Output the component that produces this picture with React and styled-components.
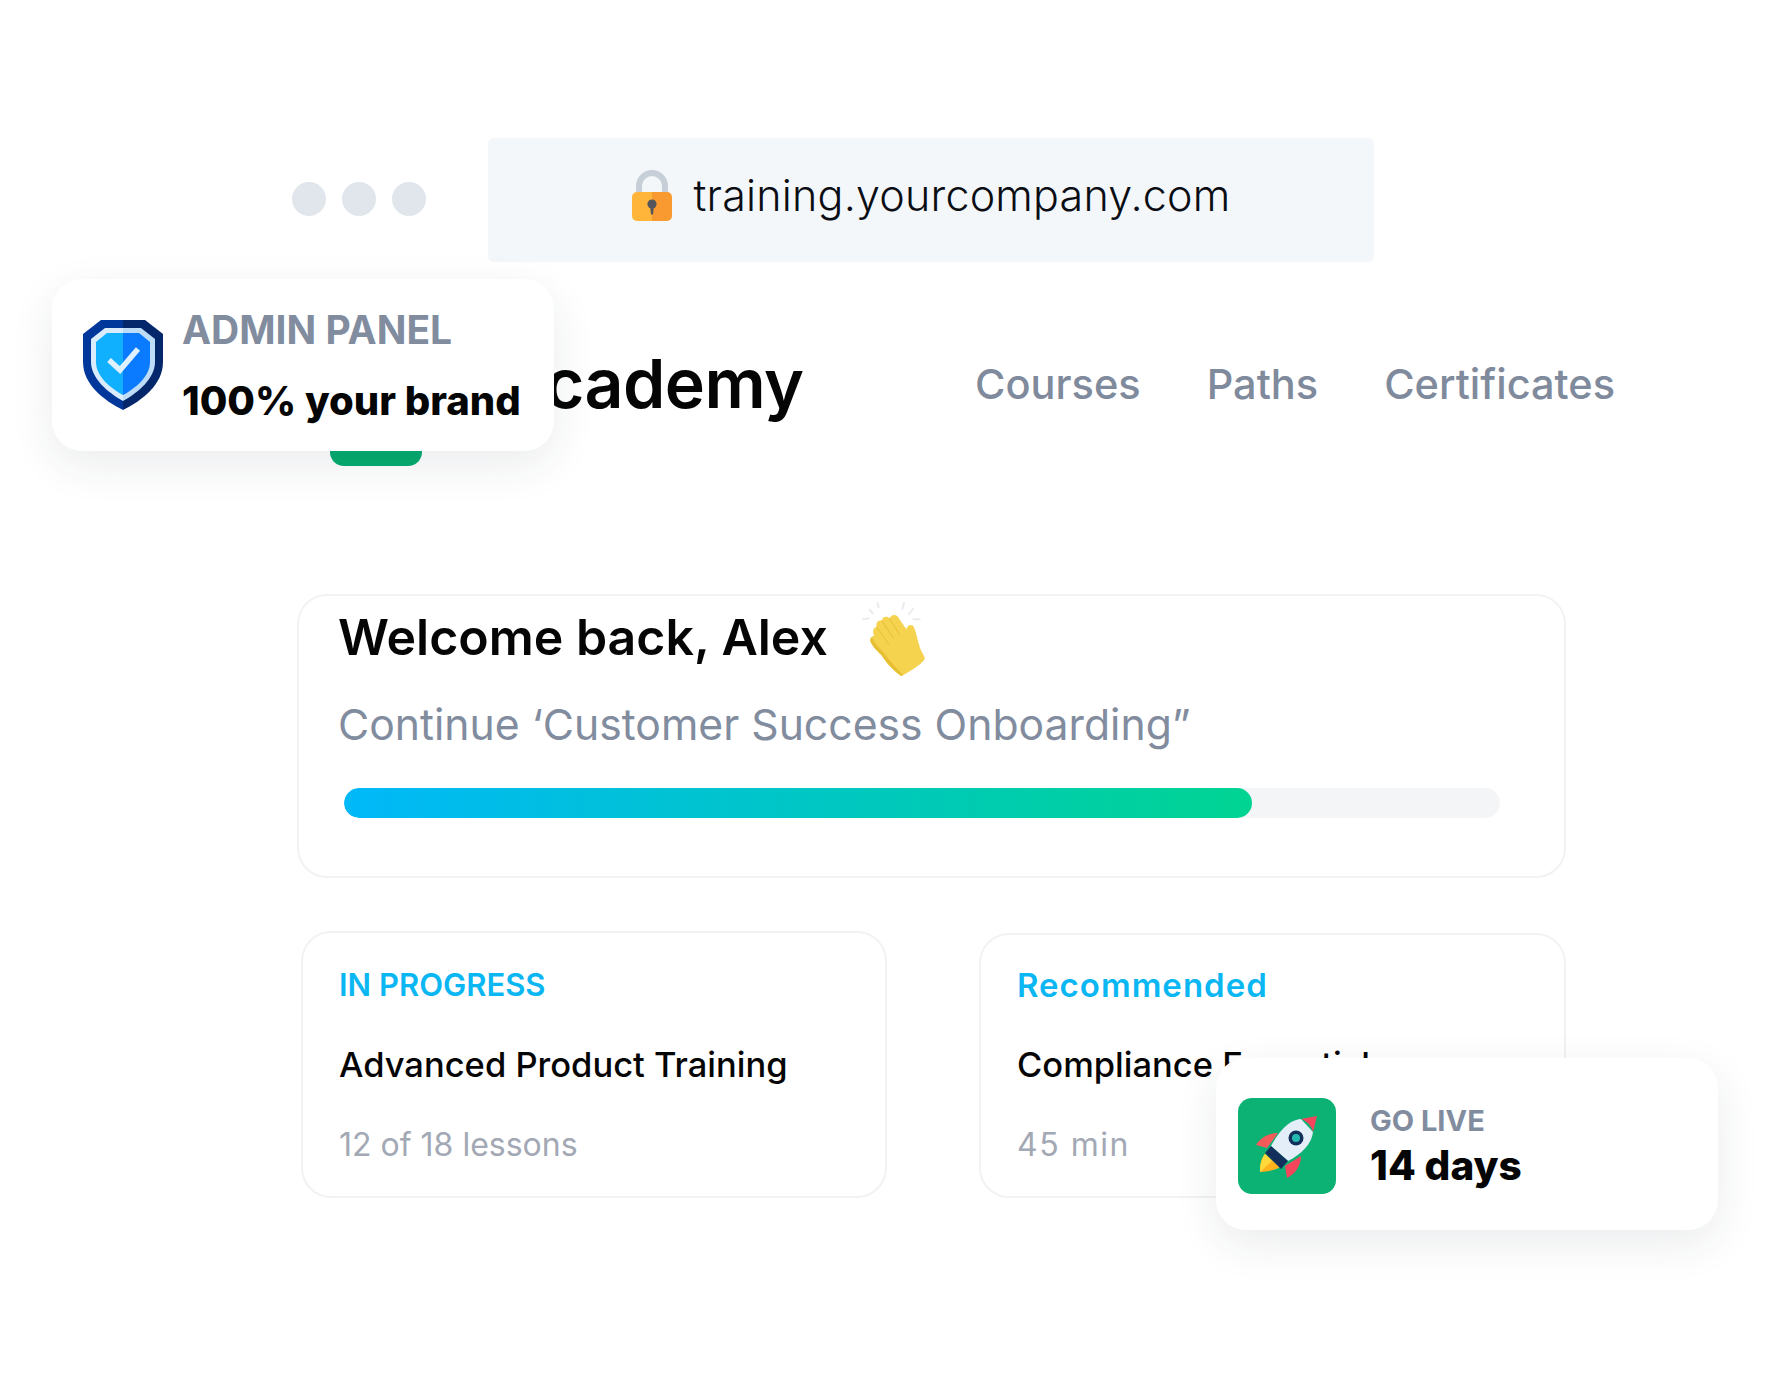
import React from "react";
import styled, { createGlobalStyle } from "styled-components";

const GlobalStyle = createGlobalStyle`
  html, body {
    margin: 0;
    background: #fff;
    font-family: Inter, "Open Sans", "Liberation Sans", sans-serif;
    color: #050505;
  }
`;

const Stage = styled.div`
  position: relative;
  width: 1770px;
  height: 1394px;
  padding: 138px 0 0 297px;
  box-sizing: border-box;
  overflow: hidden;
`;

const Frame = styled.div`
  width: 1269px;
`;

const ChromeRow = styled.div`
  display: flex;
  align-items: center;
  gap: 62px;
  margin-left: -5px;
`;

const Dots = styled.div`
  display: flex;
  gap: 16px;
  margin-top: -2px;
`;

const Dot = styled.span`
  width: 34px;
  height: 34px;
  border-radius: 50%;
  background: #e0e6eb;
`;

const UrlBar = styled.div`
  width: 886px;
  height: 124px;
  border-radius: 6px;
  background: #f4f7fa;
  display: flex;
  align-items: center;
  justify-content: center;
  gap: 22px;
  font-size: 43px;
  font-weight: 300;
  letter-spacing: 0.2px;
  color: #0a0d14;
  padding-bottom: 10px;
  box-sizing: border-box;
`;

const Header = styled.header`
  display: flex;
  align-items: flex-start;
  margin: 112px 0 128px;
  height: 92px;
`;

const Brand = styled.div`
  display: flex;
  gap: 75px;
  margin-left: 33px;
`;

const LogoTile = styled.div`
  width: 92px;
  height: 92px;
  border-radius: 14px;
  background: #05ab6f;
`;

const BrandName = styled.div`
  font-size: 68px;
  font-weight: 600;
  line-height: 80px;
  letter-spacing: -0.6px;
  margin-top: -31px;
  color: #050505;
`;

const Nav = styled.nav`
  display: flex;
  gap: 66px;
  margin-left: auto;
  margin-right: -49px;
`;

const NavLink = styled.a`
  font-size: 41.5px;
  font-weight: 500;
  line-height: 56px;
  margin-top: -18px;
  color: #7f8a9c;
`;

const Panel = styled.section`
  border: 2px solid #f0f2f4;
  border-radius: ${({ $radius }) => $radius || 30}px;
  background: #fff;
  box-sizing: border-box;
`;

const WelcomeCard = styled(Panel)`
  height: 284px;
  padding: 9px 64px 0 39px;
`;

const HeadingRow = styled.div`
  display: flex;
  align-items: flex-start;
  gap: 34px;
  height: 74px;
`;

const Heading = styled.h1`
  margin: 0;
  font-size: 50px;
  font-weight: 600;
  line-height: 64px;
  color: #050505;
`;

const Clap = styled.svg`
  width: 64px;
  height: 76px;
  margin-top: -5px;
`;

const Continue = styled.p`
  margin: 18px 0 0;
  font-size: 42.7px;
  line-height: 56px;
  font-weight: 400;
  color: #818c9e;
`;

const Track = styled.div`
  height: 30px;
  margin: 35px 0 0 6px;
  border-radius: 15px;
  background: #f3f5f7;
  overflow: hidden;
`;

const Fill = styled.div`
  height: 100%;
  border-radius: 15px;
  background: linear-gradient(90deg, #00b8f9 0%, #00d492 100%);
`;

const CardGrid = styled.div`
  display: grid;
  grid-template-columns: 586px 587px;
  column-gap: 92px;
  margin: 53px 0 0 4px;
  align-items: end;
`;

const CourseCard = styled(Panel)`
  height: ${({ $height }) => $height}px;
  padding: 0 36px 29px;
  display: flex;
  flex-direction: column;
  justify-content: flex-end;
`;

const Tag = styled.div`
  font-size: ${({ $size }) => $size}px;
  letter-spacing: ${({ $spacing }) => $spacing || 0}px;
  font-weight: 600;
  line-height: 44px;
  color: #0bb7f3;
`;

const CourseTitle = styled.div`
  margin-top: 36px;
  font-size: 34.5px;
  font-weight: 500;
  line-height: 44px;
  color: #050505;
`;

const CourseMeta = styled.div`
  margin-top: 36px;
  font-size: 32px;
  letter-spacing: ${({ $spacing }) => $spacing || 0}px;
  font-weight: 400;
  line-height: 44px;
  color: #a2a8b4;
`;

const FloatCard = styled.aside`
  position: absolute;
  left: ${({ $left }) => $left}px;
  top: ${({ $top }) => $top}px;
  width: 502px;
  height: 172px;
  border-radius: 30px;
  background: #fff;
  box-shadow: 0 14px 44px rgba(30, 40, 60, 0.09);
  display: flex;
  align-items: center;
  box-sizing: border-box;
  padding-left: ${({ $pad }) => $pad}px;
  gap: ${({ $gap }) => $gap}px;
`;

const FloatLabel = styled.div`
  font-size: ${({ $size }) => $size}px;
  font-weight: 700;
  line-height: 1.2;
  margin-top: ${({ $top }) => $top || 0}px;
  color: #818c9f;
`;

const FloatValue = styled.div`
  font-size: ${({ $size }) => $size}px;
  font-weight: 800;
  line-height: 1.2;
  margin-top: ${({ $gap }) => $gap}px;
  color: #050505;
`;

const RocketTile = styled.div`
  width: 98px;
  height: 96px;
  margin-top: 4px;
  border-radius: 14px;
  background: #0cb274;
  flex: none;
`;

function LockIcon() {
  return (
    <svg width="40" height="51" viewBox="0 0 40 51">
      <path d="M7 26V16a13 13 0 0 1 26 0v10" fill="none" stroke="#c6ced7" strokeWidth="6" />
      <path d="M20 22H5a5 5 0 0 0-5 5v19a5 5 0 0 0 5 5h15z" fill="#ffb53a" />
      <path d="M20 22h15a5 5 0 0 1 5 5v19a5 5 0 0 1-5 5H20z" fill="#f99a30" />
      <circle cx="20" cy="34" r="4.6" fill="#55565c" />
      <path d="M18 36h4l-1 8.500h-2z" fill="#55565c" />
    </svg>
  );
}

function ClapIcon() {
  return (
    <Clap viewBox="72 30 192 228">
      <g stroke="#e9ecef" strokeWidth="6" strokeLinecap="round">
        <path d="M95 60l10 10" />
        <path d="M118 38l4 14" />
        <path d="M198 38l-5 19" />
        <path d="M225 57l-12 15" />
        <path d="M75 88l17-3" />
        <path d="M226 88h19" />
      </g>
      <path
        d="M190 258C170 245 150 225 130 195C115 180 100 165 97 152C97 142 103 137 109 138C102 125 106 112 116 112C112 100 120 88 132 92C132 80 148 76 155 86C158 74 175 70 182 84L205 118C208 105 222 100 228 112C235 128 238 150 245 170C250 188 262 198 260 207C256 218 225 240 190 258Z"
        fill="#f5d34f"
      />
      <path
        d="M190 258C170 245 150 225 130 195C115 180 100 165 97 152C97 146 99 143 102 140C108 160 125 172 140 192C155 212 172 232 196 255Z"
        fill="#e6bf33"
      />
      <g stroke="#e6bf33" strokeWidth="3" strokeLinecap="round" fill="none">
        <path d="M116 112l36 50" />
        <path d="M132 92l34 52" />
        <path d="M155 86l30 48" />
      </g>
    </Clap>
  );
}

function ShieldIcon() {
  return (
    <svg width="80" height="90" viewBox="0 0 80 90">
      <path d="M40 0H18L0 14v28c0 22 20 38 40 48z" fill="#00379a" />
      <path d="M40 0h22l18 14v28c0 22-20 38-40 48z" fill="#04266b" />
      <path d="M40 8H22L8 19v23c0 16 16 30 32 39z" fill="#d9ecfb" />
      <path d="M40 8h18l14 11v23c0 16-16 30-32 39z" fill="#bcdcf7" />
      <path d="M40 13H24L13 22v20c0 14 14 26 27 33z" fill="#10b0ff" />
      <path d="M40 13h16l11 9v20c0 14-14 26-27 33z" fill="#0a7bff" />
      <path d="M26 40l11 10 18-21" fill="none" stroke="#dff1ff" strokeWidth="5.500" />
    </svg>
  );
}

function RocketIcon() {
  return (
    <svg width="98" height="96" viewBox="0 0 98 96">
      <path d="M18 47c4-7 12-12 22-12L29 50z" fill="#f55b5b" />
      <path d="M49 80c8-4 14-12 14-22L47 68z" fill="#f5455c" />
      <path d="M22 74c0-7 1-13 5-18l15 13c-5 3-13 5-20 5z" fill="#ffb31f" />
      <path d="M22 74c0-7 1-13 5-18l7 7z" fill="#ffd93b" />
      <path d="M63 21C50 22 40 35 33 48l17 15c14-7 24-18 25-29z" fill="#e4eef9" />
      <path d="M63 21l16-3-4 16c-2-7-6-11-12-13z" fill="#f5455c" />
      <path d="M27 55l6-7 17 15-7 8z" fill="#13305c" />
      <circle cx="58" cy="40" r="7.500" fill="#13305c" />
      <circle cx="58" cy="40" r="4" fill="#24b8ae" />
    </svg>
  );
}

export default function App() {
  return (
    <>
      <GlobalStyle />
      <Stage>
        <Frame>
          <ChromeRow>
            <Dots>
              <Dot />
              <Dot />
              <Dot />
            </Dots>
            <UrlBar>
              <LockIcon />
              training.yourcompany.com
            </UrlBar>
          </ChromeRow>

          <Header>
            <Brand>
              <LogoTile />
              <BrandName>Academy</BrandName>
            </Brand>
            <Nav>
              <NavLink>Courses</NavLink>
              <NavLink>Paths</NavLink>
              <NavLink>Certificates</NavLink>
            </Nav>
          </Header>

          <WelcomeCard>
            <HeadingRow>
              <Heading>Welcome back, Alex</Heading>
              <ClapIcon />
            </HeadingRow>
            <Continue>Continue ‘Customer Success Onboarding”</Continue>
            <Track>
              <Fill style={{ width: `${(908 / 1156) * 100}%` }} />
            </Track>
          </WelcomeCard>

          <CardGrid>
            <CourseCard $height={267}>
              <Tag $size={31}>IN PROGRESS</Tag>
              <CourseTitle>Advanced Product Training</CourseTitle>
              <CourseMeta>12 of 18 lessons</CourseMeta>
            </CourseCard>
            <CourseCard $height={265}>
              <Tag $size={33} $spacing={1}>Recommended</Tag>
              <CourseTitle>Compliance Essentials</CourseTitle>
              <CourseMeta $spacing={1.500}>45 min</CourseMeta>
            </CourseCard>
          </CardGrid>
        </Frame>

        <FloatCard $left={52} $top={279} $pad={31} $gap={19}>
          <ShieldIcon />
          <div>
            <FloatLabel $size={39} $top={2}>ADMIN PANEL</FloatLabel>
            <FloatValue $size={40} $gap={23}>100% your brand</FloatValue>
          </div>
        </FloatCard>

        <FloatCard $left={1216} $top={1058} $pad={22} $gap={34}>
          <RocketTile>
            <RocketIcon />
          </RocketTile>
          <div>
            <FloatLabel $size={29} $top={6}>GO LIVE</FloatLabel>
            <FloatValue $size={40.5} $gap={3}>14 days</FloatValue>
          </div>
        </FloatCard>
      </Stage>
    </>
  );
}
